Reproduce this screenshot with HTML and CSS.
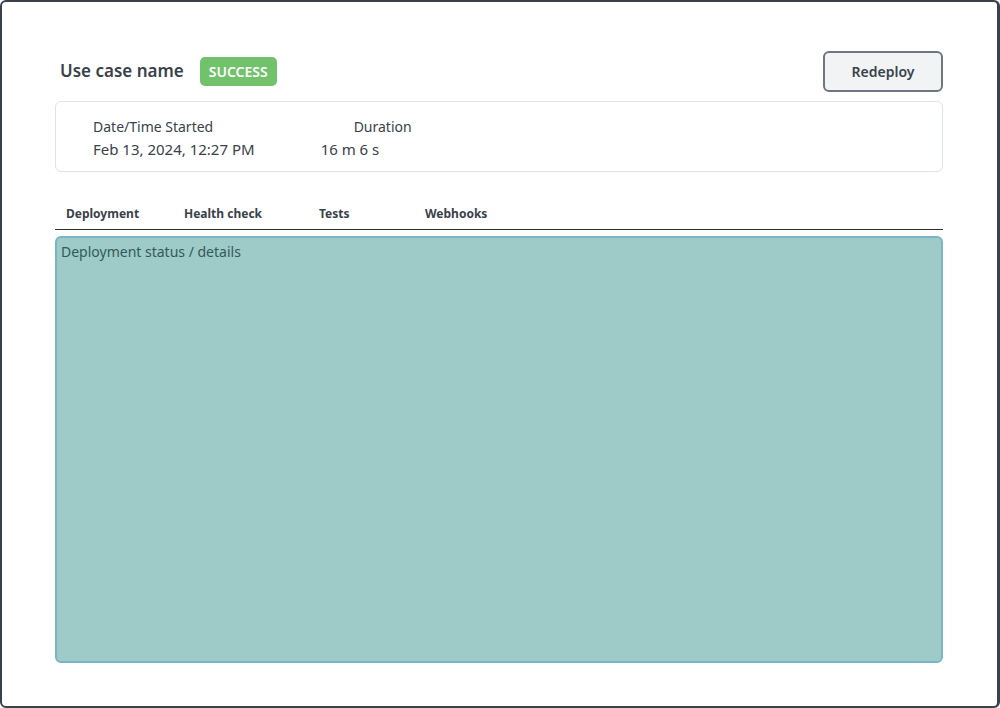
FILE: index.html
```html
<!DOCTYPE html>
<html lang="en">
<head>
<meta charset="utf-8">
<title>Use case deployment</title>
<link rel="stylesheet" href="styles.css">
</head>
<body>
<main class="frame">
  <header class="header">
    <h1 class="title">Use case name</h1>
    <span class="badge">SUCCESS</span>
    <button class="redeploy" type="button">Redeploy</button>
  </header>
  <dl class="summary">
    <div class="fact">
      <dt>Date/Time Started</dt>
      <dd>Feb 13, 2024, 12:27 PM</dd>
    </div>
    <div class="fact fact-duration">
      <dt>Duration</dt>
      <dd>16 m 6 s</dd>
    </div>
  </dl>
  <nav class="tabs">
    <a class="tab" href="#deployment">Deployment</a>
    <a class="tab" href="#health">Health check</a>
    <a class="tab" href="#tests">Tests</a>
    <a class="tab" href="#webhooks">Webhooks</a>
  </nav>
  <section class="panel" id="deployment">Deployment status / details</section>
</main>
</body>
</html>
```
FILE: styles.css
```css
* { box-sizing: border-box; }
body {
  margin: 0;
  background: #fff;
  color: #3a414a;
  font-family: "Noto Sans", "Open Sans", sans-serif;
}
.frame {
  display: flex;
  flex-direction: column;
  min-height: 100vh;
  padding: 48px 54px 43px 53px;
  border: 2px solid #3a414a;
  border-right-width: 3px;
  border-radius: 6px;
}
.header { display: flex; align-items: center; height: 42px; }
.title { margin: 0; padding-left: 5px; font-size: 17px; line-height: 28px; font-weight: 600; }
.badge {
  margin-left: 16px;
  padding: 0 9px;
  border-radius: 5px;
  background: #72c16b;
  color: #fff;
  font-size: 14px;
  line-height: 29px;
  font-weight: 600;
}
.redeploy {
  width: 120px;
  height: 41px;
  margin-left: auto;
  border: 2px solid #6f7681;
  border-radius: 6px;
  background: #f2f3f5;
  color: #3a414a;
  font: 600 14px "Noto Sans", sans-serif;
}
.summary {
  display: flex;
  gap: 66px;
  margin: 9px 0 0;
  padding: 14px 37px 11px;
  border: 1px solid #dfe2e7;
  border-radius: 6px;
}
.fact dt { font-size: 14px; line-height: 22px; }
.fact dd { margin: 0; font-size: 15px; line-height: 22px; }
.fact-duration dt { padding-left: 33px; }
.tabs {
  display: grid;
  grid-template-columns: 118px 135px 106px auto;
  margin-top: 31px;
  padding: 0 11px 4px;
  border-bottom: 1px solid #2d3238;
}
.tab {
  justify-self: start;
  color: inherit;
  font-size: 12px;
  line-height: 22px;
  font-weight: 700;
  text-decoration: none;
}
.panel {
  flex: 1;
  margin-top: 6px;
  padding: 3px 4px;
  border: 2px solid #79b5c6;
  border-radius: 6px;
  background: #9ecac7;
  color: #33595b;
  font-size: 14px;
  line-height: 22px;
}
```
